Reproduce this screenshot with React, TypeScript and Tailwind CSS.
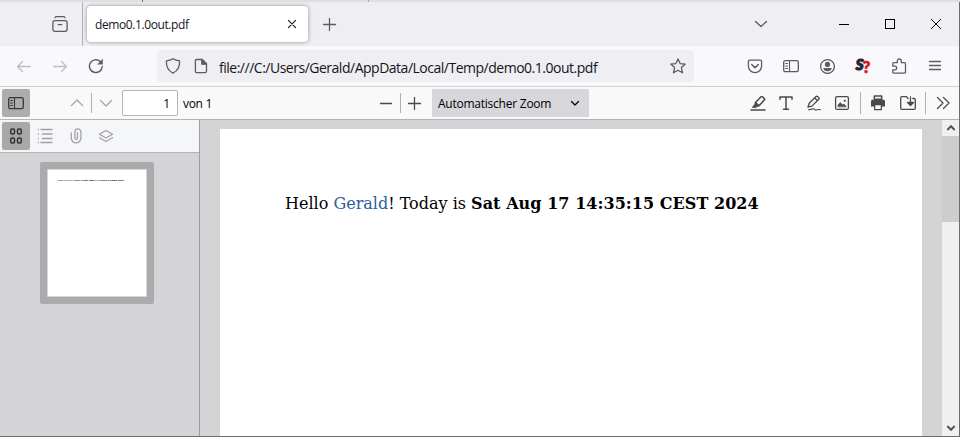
import type { ReactNode } from 'react';

type IconProps = { children: ReactNode; className?: string; size?: number };

function Icon({ children, className = '', size = 16 }: IconProps) {
  return (
    <svg
      width={size}
      height={size}
      viewBox={`0 0 ${size} ${size}`}
      fill="none"
      stroke="currentColor"
      strokeWidth="1.3"
      strokeLinecap="round"
      strokeLinejoin="round"
      className={`block shrink-0 ${className}`}
    >
      {children}
    </svg>
  );
}

function Cell({ children, className = 'w-9' }: { children: ReactNode; className?: string }) {
  return <div className={`flex h-full shrink-0 items-center justify-center ${className}`}>{children}</div>;
}

function Divider({ className = '' }: { className?: string }) {
  return <div className={`w-px shrink-0 bg-[#b0b0b2] ${className}`} />;
}

function SidebarGlyph() {
  return (
    <Icon>
      <rect x="0.7" y="2.7" width="14.6" height="11" rx="1.6" />
      <path d="M6.5 3v10.5M2.7 5.5h1.8M2.7 8h1.8M2.7 10.5h1.8" strokeWidth="1.1" />
    </Icon>
  );
}

function TabBar() {
  return (
    <div className="flex h-11 items-center bg-[#efeef3] text-[#5b5b66]">
      <Cell className="w-[82px] pl-[38px]">
        <Icon>
          <rect x="0.9" y="4.7" width="14.2" height="10.6" rx="2" />
          <path d="M3 1.700c.3-.7.8-1 1.600-1h6.800c.8 0 1.300.3 1.600 1M6.200 8.600h3.600" />
        </Icon>
      </Cell>
      <Divider className="h-full" />
      <div className="ml-1 flex h-9 w-[221px] items-center justify-between rounded bg-white pl-2 pr-2 shadow-[0_0_4px_rgba(0,0,0,0.4)]">
        <span className="whitespace-nowrap pt-0.5 text-[12px] tracking-[-0.4px] text-[#15141a]">demo0.1.0out.pdf</span>
        <Icon className="text-[#33323a]">
          <path d="M4.500 4.500l7 7M11.500 4.500l-7 7" strokeWidth="1.2" />
        </Icon>
      </div>
      <Cell className="w-11">
        <Icon>
          <path d="M7.500 2.500v12M1.500 8.500h12" />
        </Icon>
      </Cell>
      <Cell className="ml-auto w-[60px]">
        <Icon>
          <path d="M2.500 5.500L8 10.500l5.500-5" />
        </Icon>
      </Cell>
      <div className="ml-[30px] flex h-full text-black">
        <Cell className="w-[46px]">
          <div className="h-px w-[10px] bg-black" />
        </Cell>
        <Cell className="w-[46px]">
          <div className="size-[10px] border border-black" />
        </Cell>
        <Cell className="w-[46px]">
          <Icon size={10}>
            <path d="M0 0l10 10M10 0L0 10" strokeWidth="1" />
          </Icon>
        </Cell>
      </div>
    </div>
  );
}

function NavBar() {
  return (
    <div className="flex h-10 items-center bg-[#f9f9fb] pl-1.5 pr-1.5 text-[#5b5b66]">
      <Cell>
        <Icon className="text-[#bdbdc3]">
          <path d="M14.500 8.500H1.500M6.500 3.500L1.500 8.500l5 5" />
        </Icon>
      </Cell>
      <Cell>
        <Icon className="text-[#bdbdc3]">
          <path d="M1.500 8.500h13M9.500 3.500l5 5-5 5" />
        </Icon>
      </Cell>
      <Cell>
        <Icon>
          <path d="M14.200 8.500a6.400 6.400 0 1 1-2.200-5.200l1 1" strokeWidth="1.4" />
          <path d="M14.600 1.300v5h-5z" fill="currentColor" strokeWidth="0.4" />
        </Icon>
      </Cell>
      <div className="ml-[43px] flex h-8 w-[537px] items-center rounded bg-[#efeef3] pl-2 pr-2">
        <Icon>
          <path d="M8 .8c2 1.300 4 1.900 6.600 2.100.3 5.800-1.900 9.900-6.600 12.300C3.300 12.800 1.100 8.700 1.400 2.900 4 2.700 6 2.100 8 .8z" />
        </Icon>
        <Icon className="ml-3">
          <path d="M3.700 1.500h5.600l4.200 4.200v7.600c0 .8-.5 1.300-1.300 1.300H3.700c-.8 0-1.300-.5-1.300-1.300V2.800c0-.8.5-1.300 1.300-1.300z" />
          <path d="M8.800 1.500v4.700h4.700z" fill="currentColor" />
        </Icon>
        <span className="ml-[10px] whitespace-nowrap pt-0.5 text-[14px] tracking-[-0.49px] text-[#15141a]">
          file:///C:/Users/Gerald/AppData/Local/Temp/demo0.1.0out.pdf
        </span>
        <Icon className="ml-auto">
          <path d="M8 .9l2.100 4.700 5.100.5-3.800 3.500 1.100 5.200L8 12.200l-4.500 2.600 1.100-5.200L.8 6.100l5.100-.5z" />
        </Icon>
      </div>
      <div className="ml-auto flex h-full">
        <Cell>
          <Icon>
            <path d="M2.800 2.200h10.400c.8 0 1.400.6 1.400 1.400V8a6.600 6.600 0 0 1-13.200 0V3.600c0-.8.6-1.400 1.400-1.400z" />
            <path d="M4.700 6.500L8 9.600l3.300-3.100" strokeWidth="1.5" />
          </Icon>
        </Cell>
        <Cell>
          <SidebarGlyph />
        </Cell>
        <Cell>
          <Icon>
            <circle cx="8.500" cy="8.500" r="6.900" />
            <circle cx="8.500" cy="6.400" r="2.600" fill="currentColor" stroke="none" />
            <path d="M4.300 10h8.400c0 2-1.900 3.300-4.200 3.300S4.300 12 4.300 10z" fill="currentColor" stroke="none" />
          </Icon>
        </Cell>
        <Cell>
          <span className="flex items-start font-['Lato',sans-serif] font-black leading-none">
            <span className="-mt-px text-[15px] italic text-[#25243a] [-webkit-text-stroke:1.2px_#25243a]">S</span>
            <span className="-ml-px text-[17px] text-[#e01020] [-webkit-text-stroke:0.6px_#e01020]">?</span>
          </span>
        </Cell>
        <Cell>
          <Icon>
            <path d="M1.800 7.300V5.700c0-.6.400-1 1-1h3.500V3a2 2 0 0 1 4 0v1.700h3.200c.6 0 1 .4 1 1v8.500c0 .6-.4 1-1 1H2.800c-.6 0-1-.4-1-1v-2.400h2.100a1.800 1.800 0 0 0 0-3.600H1.800z" />
          </Icon>
        </Cell>
        <Cell>
          <Icon>
            <path d="M2.500 3.500h11M2.500 7.500h11M2.500 11.500h11" />
          </Icon>
        </Cell>
      </div>
    </div>
  );
}

function PdfToolbar() {
  return (
    <div className="flex h-[34px] items-center border-y border-b-[#b4b4b6] border-t-[#cfcfd3] bg-[#f9f9fa] pl-0.5 text-[#4a4a4c]">
      <div className="flex h-7 w-7 items-center justify-center rounded-[2px] bg-[#adadad] text-[#38383a]">
        <SidebarGlyph />
      </div>
      <Icon className="ml-[39px] text-[#a4a4a6]">
        <path d="M2.500 10.500L8 5l5.500 5.500" />
      </Icon>
      <Divider className="ml-1.5 h-5" />
      <Icon className="ml-1.5 text-[#a4a4a6]">
        <path d="M2.500 5.500L8 11l5.500-5.500" />
      </Icon>
      <div className="ml-2 flex h-[26px] w-14 items-center justify-end rounded-[2px] border border-[#b6b6b9] bg-white pr-[7px] pt-0.5 text-[12px] text-black">
        1
      </div>
      <span className="ml-[5px] w-[60px] whitespace-nowrap pt-0.5 text-[12px] tracking-[-0.3px] text-black">von 1</span>
      <Icon className="ml-[135px]">
        <path d="M2.500 8.500h11" />
      </Icon>
      <Divider className="ml-1.5 h-5" />
      <Icon className="ml-1.5">
        <path d="M7.500 2.500v12M1.500 8.500h12" />
      </Icon>
      <div className="ml-[9px] flex h-7 w-[157px] items-center justify-between bg-[#d7d7db] pl-1.5 pr-1.5 text-black">
        <span className="whitespace-nowrap pt-0.5 text-[12px] tracking-[-0.24px]">Automatischer Zoom</span>
        <Icon>
          <path d="M4.500 6.500L8 10l3.500-3.500" strokeWidth="1.2" />
        </Icon>
      </div>
      <div className="ml-auto flex h-full items-center pr-0.5">
        <Cell className="w-7">
          <Icon>
            <path d="M1 15h14" strokeWidth="1.6" />
            <path d="M5.500 7.500L11 1.800c.5-.5 1-.5 1.500 0l1.800 1.800c.5.5.5 1 0 1.500L9 10.700z" strokeWidth="1.5" />
            <path d="M5.500 7.500L9 10.700l-2 1.100-1.200.6H2.300l2.300-2.800z" fill="currentColor" strokeWidth="0.8" />
          </Icon>
        </Cell>
        <Cell className="w-7">
          <Icon>
            <path d="M2 4.300V1.900h12v2.400M8 1.900v12.300M5.500 14.300h5" strokeWidth="1.5" />
          </Icon>
        </Cell>
        <Cell className="w-7">
          <Icon>
            <path d="M2 12l1.200-3.700L10 1.500c.5-.5 1-.5 1.500 0l1.300 1.300c.5.500.5 1 0 1.500l-6.900 6.800zM8.700 3l2.800 2.800" />
            <path d="M2.500 14.800c2.500-.2 4.500-1.200 5.500-1s.6 1.400 2 1.200 2.600-.9 4.300-.4" strokeWidth="1.1" />
          </Icon>
        </Cell>
        <Cell className="w-7">
          <Icon>
            <rect x="1.600" y="1.600" width="12.800" height="12.800" rx="1.500" />
            <path d="M4 11.500V10l2.300-2.500L8.500 10l1-1L12 11v.5z" fill="currentColor" strokeWidth="0.700" />
            <circle cx="10.700" cy="5.800" r="1.100" fill="currentColor" stroke="none" />
          </Icon>
        </Cell>
        <Divider className="ml-1 mr-[3px] h-[22px]" />
        <Cell className="w-7">
          <Icon>
            <path d="M4.300 1h7.400v3.200H4.300z" strokeWidth="1.500" />
            <path d="M2.500 4.800h11c.9 0 1.500.6 1.500 1.500v5.200H1V6.300c0-.9.600-1.500 1.500-1.500z" fill="currentColor" stroke="none" />
            <path d="M4.600 9.500h6.800v5.200H4.600z" fill="#f9f9fa" />
          </Icon>
        </Cell>
        <Cell className="ml-0.5 w-7">
          <Icon>
            <path d="M8 3.500L6.500 1.700H1.900c-.7 0-1.200.5-1.200 1.200v10.200c0 .7.500 1.200 1.200 1.200h12.200c.7 0 1.200-.5 1.200-1.200V4.700c0-.7-.5-1.200-1.200-1.200h-1.300" />
            <path d="M10.500 2v8M7.500 7.500l3 3 3-3z" fill="currentColor" />
          </Icon>
        </Cell>
        <Divider className="ml-[3px] mr-[3px] h-[22px]" />
        <Cell className="w-7">
          <Icon>
            <path d="M2.500 2.500L8 8l-5.500 5.500M8.500 2.500L14 8l-5.500 5.500" />
          </Icon>
        </Cell>
      </div>
    </div>
  );
}

function PageText() {
  return (
    <>
      Hello <span className="text-[#2a6099]">Gerald</span>! Today is{' '}
      <b className="tracking-[0.05px]">Sat Aug 17 14:35:15 CEST 2024</b>
    </>
  );
}

function Sidebar() {
  return (
    <div className="flex w-[200px] shrink-0 flex-col border-r border-[#9d9d9f] bg-[#d4d4d6]">
      <div className="flex h-[33px] shrink-0 items-center gap-0.5 border-b border-[#b4b4b6] bg-[#f5f6f8] pl-0.5 text-[#a2a2a4]">
        <div className="flex size-7 items-center justify-center rounded-[2px] bg-[#a8a9a9] text-[#333335]">
          <Icon>
            <g strokeWidth="1.500">
              <rect x="2.700" y="0.900" width="3.800" height="5.200" rx="1.300" />
              <rect x="9.500" y="0.900" width="3.800" height="5.200" rx="1.300" />
              <rect x="2.700" y="9.900" width="3.800" height="5.200" rx="1.300" />
              <rect x="9.500" y="9.900" width="3.800" height="5.200" rx="1.300" />
            </g>
          </Icon>
        </div>
        <Cell className="w-7 pr-0.5">
          <Icon>
            <path d="M.8 1.500h1M.8 10.500h1M.8 6h1M.8 14.500h1M3.500 1.500h12M5 6h10.500M5 10.500h10.500M3.500 14.500h12" strokeLinecap="butt" strokeWidth="1.400" />
          </Icon>
        </Cell>
        <Cell className="w-7">
          <Icon>
            <path d="M3.300 5v5.300a4.800 4.800 0 0 0 9.600 0V4a3 3 0 0 0-6 0v6.300a1.300 1.300 0 0 0 2.600 0V5" transform="translate(0 -.2)" />
          </Icon>
        </Cell>
        <Cell className="w-7">
          <Icon>
            <path d="M8 2.500l6.500 3.800L8 10 1.500 6.300zM1.500 9.800L8 13.500l6.500-3.700" />
          </Icon>
        </Cell>
      </div>
      <div className="ml-10 mt-[9px] h-[142px] w-[114px] rounded-[2px] bg-[#ababad] p-[7px]">
        <div className="h-full w-full overflow-hidden border border-[#d6d6d8] bg-white pl-[9px] pt-[9px]">
          <div className="h-1 w-[500px] origin-top-left scale-[0.1416] whitespace-nowrap font-['DejaVu_Serif',serif] text-[16px] leading-[24px] text-black [-webkit-text-stroke:0.3px]">
            <PageText />
          </div>
        </div>
      </div>
    </div>
  );
}

function Scrollbar() {
  return (
    <div className="flex w-[17px] shrink-0 flex-col bg-[#f0f0f0] text-[#555555]">
      <div className="flex h-4 items-center justify-center">
        <Icon size={10}>
          <path d="M1.300 7L5 3.200 8.700 7" strokeWidth="2" strokeLinecap="butt" strokeLinejoin="miter" />
        </Icon>
      </div>
      <div className="h-[86px] bg-[#cdcdcd]" />
      <div className="mt-auto flex h-[17px] items-center justify-center">
        <Icon size={10}>
          <path d="M1.300 3L5 6.800 8.700 3" strokeWidth="2" strokeLinecap="butt" strokeLinejoin="miter" />
        </Icon>
      </div>
    </div>
  );
}

export default function App() {
  return (
    <div className="flex h-[437px] w-[960px] flex-col overflow-hidden font-['Open_Sans','Noto_Sans',sans-serif]">
      <div className="flex h-0.5 shrink-0 bg-[#dfdfdf]">
        <div className="w-[143px] border-r border-[#777777]" />
        <div className="w-[226px] border-r border-[#aaaaaa]" />
      </div>
      <div className="flex h-[435px] flex-col border-b border-r border-[#6c6c6c]">
        <TabBar />
        <NavBar />
        <PdfToolbar />
        <div className="flex min-h-0 flex-1">
          <Sidebar />
          <div className="flex flex-1 bg-[#d4d4d7] pl-5 pr-5 pt-[9px]">
            <div className="w-full bg-white pl-[65px] pt-16">
              <p className="whitespace-nowrap font-['DejaVu_Serif',serif] text-[16px] leading-[22px] text-black">
                <PageText />
              </p>
            </div>
          </div>
          <Scrollbar />
        </div>
      </div>
    </div>
  );
}
